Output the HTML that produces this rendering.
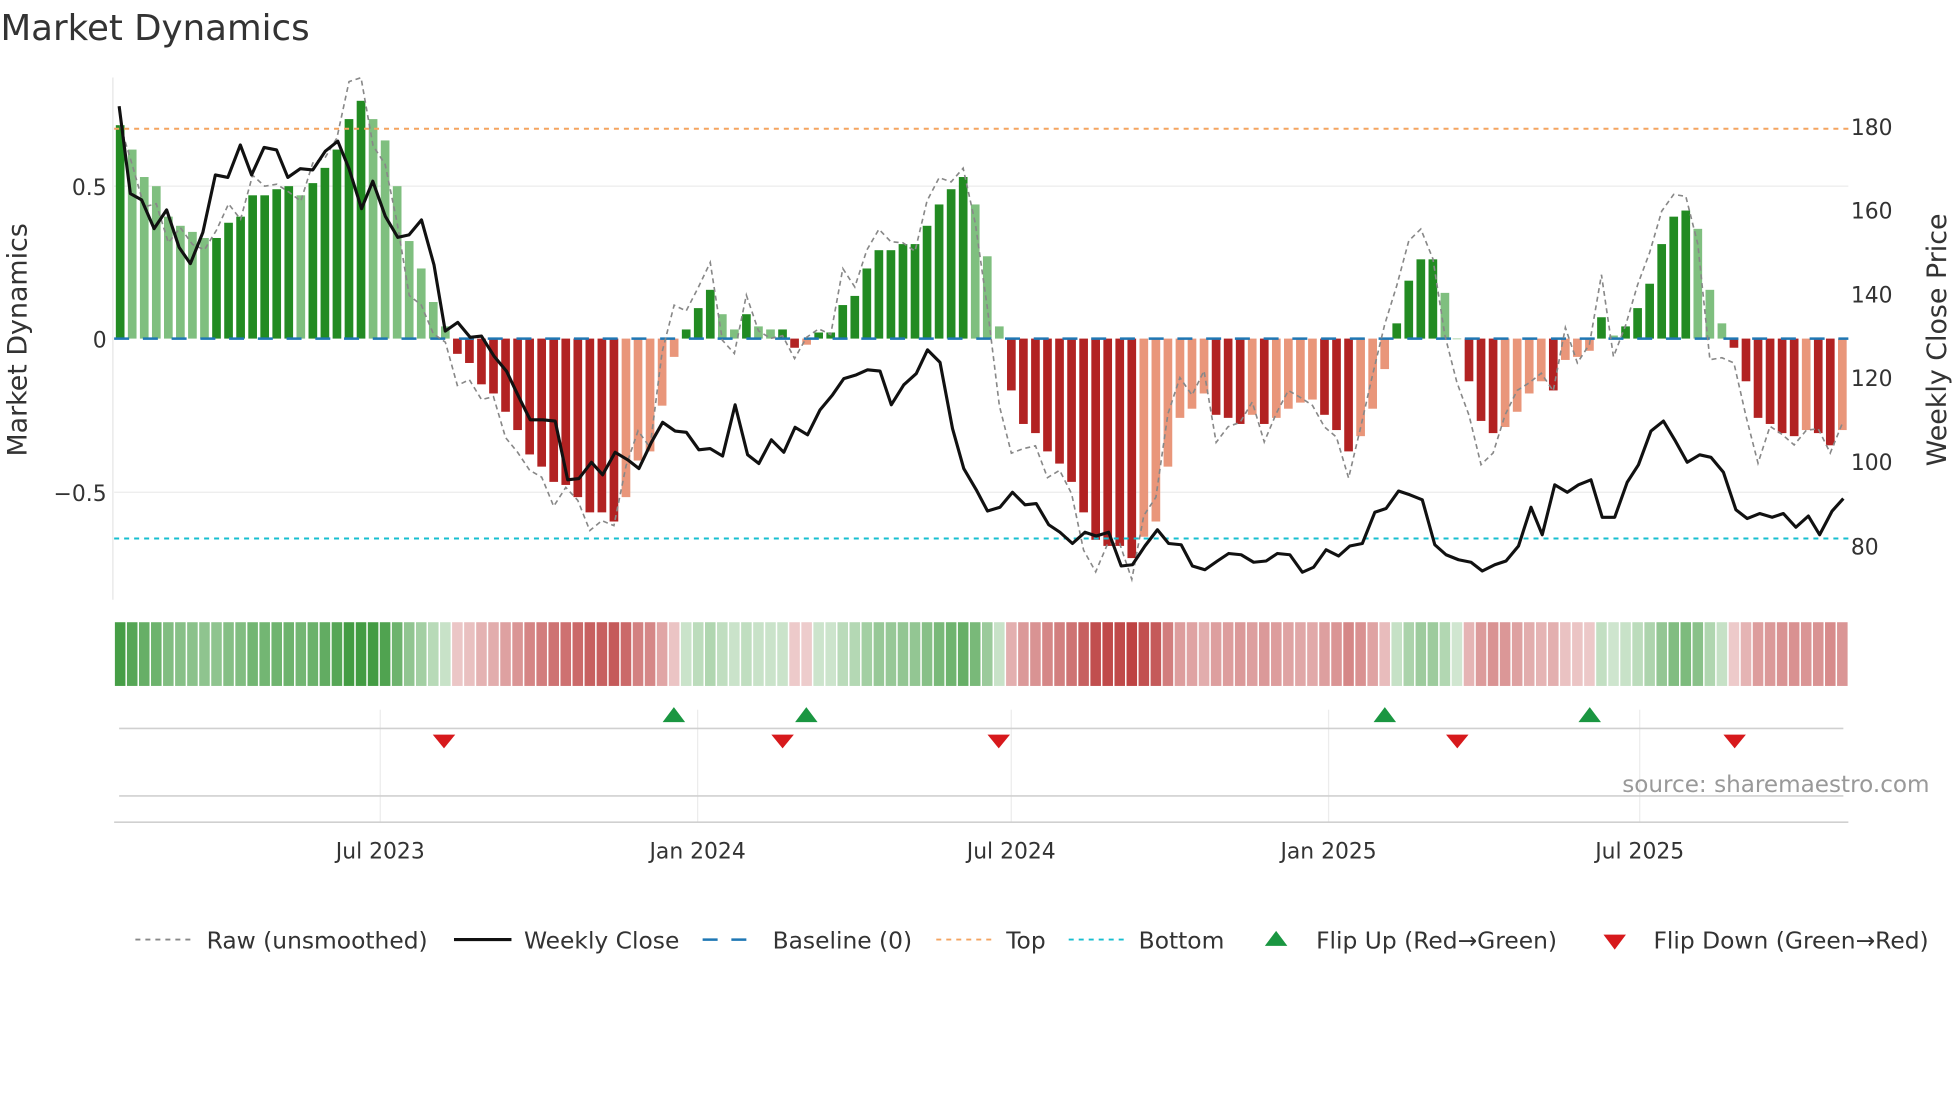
<!DOCTYPE html>
<html><head><meta charset="utf-8"><style>
html,body{margin:0;padding:0;background:#fff;overflow:hidden}
svg{display:block}
text{font-family:"DejaVu Sans","Liberation Sans",sans-serif;fill:#333}
</style></head><body>
<svg id="s" width="1960" height="1102" viewBox="0 0 1568 882" xmlns="http://www.w3.org/2000/svg">
<text x="0" y="32" font-size="28.5">Market Dynamics</text>
<g id="grid"></g>
<g id="bars"></g>
<g id="strip"></g>
<g id="lines"></g>
<line x1="90" y1="62" x2="90" y2="480" stroke="#e6e6e6" stroke-width="1"/>
<text x="85" y="156" font-size="17.5" text-anchor="end">0.5</text>
<text x="85" y="278" font-size="17.5" text-anchor="end">0</text>
<text x="85" y="401" font-size="17.5" text-anchor="end">−0.5</text>
<text x="1481" y="108" font-size="17.5">180</text>
<text x="1481" y="175" font-size="17.5">160</text>
<text x="1481" y="242" font-size="17.5">140</text>
<text x="1481" y="309" font-size="17.5">120</text>
<text x="1481" y="376" font-size="17.5">100</text>
<text x="1481" y="444" font-size="17.5">80</text>
<text transform="translate(21,272) rotate(-90)" font-size="21.5" text-anchor="middle">Market Dynamics</text>
<text transform="translate(1557,272) rotate(-90)" font-size="21.5" text-anchor="middle">Weekly Close Price</text>
<line x1="95" y1="583" x2="1475" y2="583" stroke="#d0d0d0" stroke-width="1.3"/>
<line x1="95" y1="637" x2="1475" y2="637" stroke="#d0d0d0" stroke-width="1.3"/>
<line x1="91" y1="658" x2="1479" y2="658" stroke="#d0d0d0" stroke-width="1.3"/>
<text x="1544" y="634" font-size="18.5" text-anchor="end" style="fill:#999">source: sharemaestro.com</text>
<g font-size="17.5" text-anchor="middle">
<text x="304" y="687">Jul 2023</text><text x="558" y="687">Jan 2024</text><text x="809" y="687">Jul 2024</text><text x="1063" y="687">Jan 2025</text><text x="1312" y="687">Jul 2025</text>
</g>
<g id="tri"></g>
<g font-size="18.7">
<line x1="108" y1="752" x2="153" y2="752" stroke="#888" stroke-width="1.5" stroke-dasharray="4,4"/>
<text x="165" y="759">Raw (unsmoothed)</text>
<line x1="363" y1="752" x2="409" y2="752" stroke="#111" stroke-width="2.5"/>
<text x="419" y="759">Weekly Close</text>
<line x1="562" y1="752" x2="607" y2="752" stroke="#1f77b4" stroke-width="2" stroke-dasharray="12,11"/>
<text x="618" y="759">Baseline (0)</text>
<line x1="749" y1="752" x2="794" y2="752" stroke="#f4a460" stroke-width="1.5" stroke-dasharray="4,4"/>
<text x="805" y="759">Top</text>
<line x1="855" y1="752" x2="900" y2="752" stroke="#17becf" stroke-width="1.5" stroke-dasharray="4,4"/>
<text x="911" y="759">Bottom</text>
<polygon points="1012,757 1030,757 1021,745" fill="#1a9641"/>
<text x="1053" y="759">Flip Up (Red→Green)</text>
<polygon points="1283,748 1301,748 1292,760" fill="#d7191c"/>
<text x="1323" y="759">Flip Down (Green→Red)</text>
</g>
</svg>
<script>
const NS="http://www.w3.org/2000/svg";
function el(p,t,a){const e=document.createElementNS(NS,t);for(const k in a)e.setAttribute(k,a[k]);document.getElementById(p).appendChild(e);return e;}
const v=[0.70,0.62,0.53,0.50,0.40,0.37,0.35,0.33,0.33,0.38,0.40,0.47,0.47,0.49,0.50,0.47,0.51,0.56,0.62,0.72,0.78,0.72,0.65,0.50,0.32,0.23,0.12,0.04,-0.05,-0.08,-0.15,-0.18,-0.24,-0.30,-0.38,-0.42,-0.47,-0.48,-0.52,-0.57,-0.57,-0.60,-0.52,-0.40,-0.37,-0.22,-0.06,0.03,0.10,0.16,0.08,0.03,0.08,0.04,0.03,0.03,-0.03,-0.02,0.02,0.02,0.11,0.14,0.23,0.29,0.29,0.31,0.31,0.37,0.44,0.49,0.53,0.44,0.27,0.04,-0.17,-0.28,-0.31,-0.37,-0.41,-0.47,-0.57,-0.66,-0.68,-0.68,-0.72,-0.65,-0.60,-0.42,-0.26,-0.23,-0.18,-0.25,-0.26,-0.28,-0.25,-0.28,-0.26,-0.23,-0.21,-0.20,-0.25,-0.30,-0.37,-0.32,-0.23,-0.10,0.05,0.19,0.26,0.26,0.15,0.00,-0.14,-0.27,-0.31,-0.29,-0.24,-0.18,-0.14,-0.17,-0.07,-0.06,-0.04,0.07,0.01,0.04,0.10,0.18,0.31,0.40,0.42,0.36,0.16,0.05,-0.03,-0.14,-0.26,-0.28,-0.31,-0.32,-0.30,-0.31,-0.35,-0.30];
const n=v.length, x0=91, step=(1479-91)/n, bw=step*0.72, y0=271, k=244;
[149,394].forEach(y=>el('grid','line',{x1:91,x2:1479,y1:y,y2:y,stroke:'#ececec','stroke-width':1}));
[304,558,809,1063,1312].forEach(x=>el('grid','line',{x1:x,x2:x,y1:568,y2:658,stroke:'#ececec','stroke-width':1}));
for(let i=0;i<n;i++){
  const val=v[i],prev=i?v[i-1]:0,x=x0+i*step+(step-bw)/2;
  let c;
  if(val>=0) c=(val>=prev)?'#228b22':'#7fbf7f'; else c=(val<=prev)?'#b22222':'#e9967a';
  const h=Math.abs(val)*k;
  el('bars','rect',{x:x,y:val>=0?y0-h:y0,width:bw,height:Math.max(h,0.5),fill:c});
  const a=Math.min(1,0.25+Math.abs(val)*1.05);
  const base=val>=0?[34,139,34]:[178,34,34];
  const col=base.map(b=>Math.round(255-(255-b)*a*0.85));
  el('strip','rect',{x:x0+i*step+0.6,y:498,width:step-1.2,height:51,fill:'rgb('+col.join(',')+')'});
}
el('lines','line',{x1:91,x2:1479,y1:271,y2:271,stroke:'#1f77b4','stroke-width':2,'stroke-dasharray':'12,11'});
el('lines','line',{x1:91,x2:1479,y1:103,y2:103,stroke:'#f4a460','stroke-width':1.6,'stroke-dasharray':'4,4'});
el('lines','line',{x1:91,x2:1479,y1:431,y2:431,stroke:'#17becf','stroke-width':1.6,'stroke-dasharray':'4,4'});
let rp=[];for(let i=0;i<n;i++){const r=v[i]+1.0*(v[i]-(i?v[i-1]:v[i]))+0.03*Math.sin(i*1.7);rp.push((x0+(i+0.5)*step).toFixed(1)+','+(y0-r*k).toFixed(1));}
el('lines','polyline',{points:rp.join(' '),fill:'none',stroke:'#888','stroke-width':1.3,'stroke-dasharray':'4,3'});
const p="95,85 104,155 113,160 123,183 133,168 143,198 152,211 162,186 172,140 182,142 192,116 201,140 211,118 221,120 230,142 240,135 250,136 260,121 270,113 279,135 289,167 298,145 308,173 318,190 327,188 337,176 347,212 356,265 366,258 376,270 385,269 395,285 405,297 415,318 424,336 434,336 444,337 454,384 463,383 473,370 482,380 492,362 502,368 511,375 521,354 530,338 540,345 549,346 559,360 568,359 578,365 588,324 598,364 607,371 617,352 627,362 636,342 646,348 656,328 666,316 675,303 685,300 694,296 704,297 713,324 723,308 733,299 742,280 752,290 762,343 771,375 781,392 790,409 800,406 810,394 820,404 829,403 839,420 848,426 858,435 868,426 877,429 887,426 897,453 906,452 916,437 926,424 935,435 945,436 954,453 964,456 974,449 983,443 993,444 1003,450 1013,449 1022,443 1032,444 1042,458 1051,454 1061,440 1071,445 1080,437 1090,435 1100,410 1109,407 1119,393 1128,396 1138,400 1148,436 1157,444 1167,448 1177,450 1186,457 1196,452 1205,449 1215,437 1225,406 1234,428 1244,388 1254,394 1263,388 1273,384 1282,414 1292,414 1302,386 1311,372 1321,345 1331,337 1340,352 1350,370 1360,364 1369,366 1379,378 1389,408 1398,415 1408,411 1418,414 1427,411 1437,422 1447,413 1456,428 1466,409 1475,399";
el('lines','polyline',{points:p,fill:'none',stroke:'#111','stroke-width':2.5,'stroke-linejoin':'round'});
[539,645,1108,1272].forEach(x=>el('tri','polygon',{points:(x-9)+',578 '+(x+9)+',578 '+x+',566',fill:'#1a9641'}));
[355,626,799,1166,1388].forEach(x=>el('tri','polygon',{points:(x-9)+',588 '+(x+9)+',588 '+x+',599',fill:'#d7191c'}));
</script>
</body></html>
